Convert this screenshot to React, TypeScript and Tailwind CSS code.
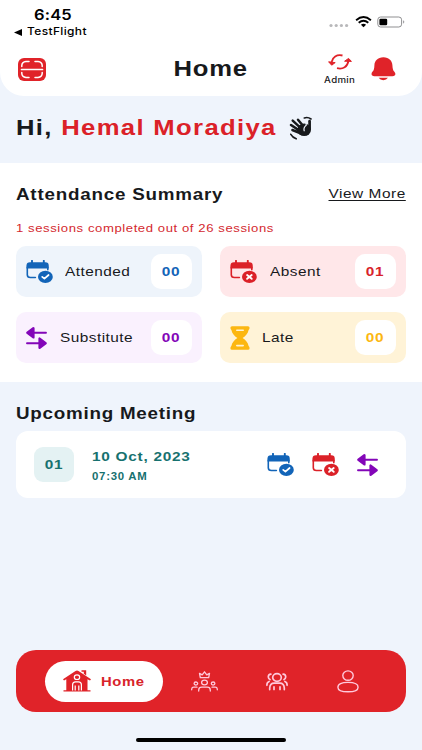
import React from 'react';
import { clsx } from 'clsx';

interface IconProps {
  className?: string;
}

interface WideProps {
  className?: string;
  children: React.ReactNode;
}

// Extended lettering used all over the app
const Wide: React.FC<WideProps> = ({ className, children }) => (
  <span className={clsx('inline-block shrink-0 scale-x-[1.14] whitespace-nowrap', className)}>{children}</span>
);

const ScanIcon = () => (
  <svg width="28" height="23" viewBox="0 0 28 23" fill="none">
    <rect x="0" y="0" width="28" height="23" rx="6" fill="#e02329" />
    <path
      d="M3.8 8.5V7.5Q4 4 8 3.6H11M17 3.6H20Q24 4 24.2 7.5V8.5M3.8 14.5V15.5Q4 19 8 19.4H11M17 19.4H20Q24 19 24.2 15.5V14.5"
      stroke="#fff"
      strokeWidth="1.5"
      strokeLinecap="round"
    />
    <path d="M3.5 11.5H24.5" stroke="#fff" strokeWidth="1.7" strokeLinecap="round" />
  </svg>
);

const SwitchIcon = () => (
  <svg width="24" height="16" viewBox="0 0 24 16" fill="none" stroke="#e02329" strokeWidth="1.8">
    <path d="M14.5 1.5C8.5 .2 4.6 3.2 3.6 8" />
    <path d="M9 14.2C15 15.8 19.5 12.6 20.4 7" />
    <path d="M.6 7.8L7.2 8.6L3.7 11.2Z" fill="#e02329" strokeWidth="1" strokeLinejoin="round" />
    <path d="M16.6 7.2L23.4 7.4L20.6 4.4Z" fill="#e02329" strokeWidth="1" strokeLinejoin="round" />
  </svg>
);

const BellIcon = () => (
  <svg width="25" height="24" viewBox="0 0 25 24" fill="#e02329">
    <path d="M12.4 .3C6.5 .3 3.6 4 3.4 8.2C3.3 11.8 2.9 13.2 1.4 14.8C-.2 16.8 .4 19.3 3.4 19.3H21.4C24.6 19.3 25.2 16.8 23.4 14.8C22 13.2 21.6 11.8 21.4 8.2C21.2 4 18.2 .3 12.4 .3Z" />
    <path d="M7.6 20.8H17Q15.4 23.2 12.3 23.2T7.6 20.8Z" />
  </svg>
);

const WaveIcon = () => (
  <svg width="24" height="25" viewBox="0 0 24 25" fill="none" stroke="#17191c" strokeLinecap="round">
    <ellipse cx="15.2" cy="13.8" rx="6.8" ry="6.3" fill="#17191c" stroke="none" />
    <path d="M3.7 4.6L11.5 11.8M9 3.8L14 9.8M2 9L10.5 14.6M3.4 14L11 17.2" strokeWidth="2.5" />
    <path d="M20.6 5.2V13" strokeWidth="2.7" />
    <path d="M17.2 5.6V9.2Q14.2 11.6 15.2 14.8" stroke="#eff4fc" strokeWidth="1.2" />
    <path d="M15.3 2Q18.8 .7 22 3M1.8 18.3Q3.6 21.4 7.2 22.8" strokeWidth="1.6" />
  </svg>
);

const CalendarIcon: React.FC<IconProps & { mark: 'check' | 'cross' }> = ({ className, mark }) => (
  <svg width="28" height="24" viewBox="0 0 28 24" fill="none" className={className}>
    <path d="M6 .8V3M17.8 .8V3" stroke="currentColor" strokeWidth="1.9" strokeLinecap="round" />
    <path d="M.5 8.6V5.2Q.5 2.2 4 2.2H19.4Q22.7 2.2 22.7 5.2V8.6Z" fill="currentColor" />
    <path d="M1.3 7V14.8Q1.3 17.5 4.4 17.5H9.4M21.8 7V9.8" stroke="currentColor" strokeWidth="1.6" strokeLinecap="round" />
    <ellipse cx="19.4" cy="16.9" rx="7.4" ry="6.1" fill="currentColor" />
    {mark === 'check' ? (
      <path d="M16.2 16.9L18.4 18.7L22.6 15" stroke="#fff" strokeWidth="1.7" strokeLinecap="round" strokeLinejoin="round" />
    ) : (
      <path d="M17.1 15.1L21.7 18.8M21.7 15.1L17.1 18.8" stroke="#fff" strokeWidth="1.9" strokeLinecap="round" />
    )}
  </svg>
);

const SwapIcon = () => (
  <svg width="21" height="24" viewBox="0 0 21 24" className="text-[#8306b8]">
    <path d="M6 6.8H20M1 17.2H15" stroke="currentColor" strokeWidth="1.9" strokeLinecap="round" />
    <path d="M1.4 6.8L7.4 2.2V11.4ZM19.6 17.2L13.6 12.6V21.8Z" fill="currentColor" stroke="currentColor" strokeWidth="2.4" strokeLinejoin="round" />
  </svg>
);

const HourglassIcon = () => (
  <svg width="20" height="24" viewBox="0 0 20 24" fill="none">
    <path
      d="M2 .2H18Q19.6 .2 19.6 1.7Q19.6 3.2 18.6 4C18 7.6 15.6 10 12.6 12C15.6 14 18 16.4 18.6 20Q19.6 20.8 19.6 22.3Q19.6 23.8 18 23.8H2Q.4 23.8 .4 22.3Q.4 20.8 1.4 20C2 16.4 4.4 14 7.4 12C4.4 10 2 7.6 1.4 4Q.4 3.2 .4 1.7Q.4 .2 2 .2Z"
      fill="#fcb711"
    />
    <path d="M6.8 4.2H13.2M6.8 19.6H13.2" stroke="#fff3d4" strokeWidth="1.6" strokeLinecap="round" />
  </svg>
);

const HouseIcon = () => (
  <svg width="28" height="22" viewBox="0 0 28 22" fill="none">
    <path d="M0 9.2L12.5 .9Q14 .2 15.5 .9L28 9.2L27 10.4L24.5 9.2V20.3H27.5V21.6H.5V20.3H3.3V9.2L1 10.4Z" fill="#e02329" />
    <path d="M18.5 .3H23.2V5.4L20.8 3.8V1.8H18.5Z" fill="#e02329" />
    <ellipse cx="14" cy="7.2" rx="2.7" ry="2.3" stroke="#fff" strokeWidth="1.2" />
    <path d="M9.6 20.6V14.8Q9.6 11.9 12.6 11.9H15.4Q18.4 11.9 18.4 14.8V20.6M12.2 20.6V15.4M15.8 20.6V15.4" stroke="#fff" strokeWidth="1.2" />
  </svg>
);

const LeadersIcon = () => (
  <svg width="27" height="21" viewBox="0 0 27 21" fill="none" stroke="#ffc9dc" strokeWidth="1.3" strokeLinecap="round" strokeLinejoin="round">
    <path d="M9.3 6.6L8.5 2.4L11.2 3.9L13.5 .8L15.8 3.9L18.5 2.4L17.7 6.6Z" />
    <ellipse cx="13.5" cy="11.5" rx="2.9" ry="2.3" />
    <ellipse cx="4.9" cy="12.5" rx="1.8" ry="1.5" />
    <ellipse cx="22.1" cy="12.5" rx="1.8" ry="1.5" />
    <path d="M7.7 20.1V18.9Q7.8 16.2 10.8 16.2H16.2Q19.2 16.2 19.3 18.9V20.1M.7 18.8V18Q.9 16.2 2.9 16.2H6M26.3 18.8V18Q26.1 16.2 24.1 16.2H21" />
  </svg>
);

const MembersIcon = () => (
  <svg width="22" height="19" viewBox="0 0 22 19" fill="none" stroke="#ffc9dc" strokeWidth="1.7" strokeLinecap="round" strokeLinejoin="round">
    <ellipse cx="11" cy="5.5" rx="4.3" ry="3.8" />
    <path d="M3.7 17.6V16Q4 11.2 8.2 11.2H13.8Q18 11.2 18.3 16V17.6M8 14.8V17.4M14 14.8V17.4" />
    <path d="M4.9 2.1Q2.2 2.4 2.3 5Q2.4 6.9 4 7.5M17.1 2.1Q19.8 2.4 19.7 5Q19.6 6.9 18 7.5M3.1 9.5Q.8 10.4 .9 13.3M18.9 9.5Q21.2 10.4 21.1 13.3" />
  </svg>
);

const ProfileIcon = () => (
  <svg width="22" height="23" viewBox="0 0 22 23" fill="none" stroke="#ffc9dc" strokeWidth="1.4">
    <ellipse cx="11" cy="5.6" rx="5.2" ry="4.7" />
    <path d="M.9 17.2C.9 13.8 4.6 12.4 11 12.4S21.1 13.8 21.1 17.2C21.1 20.8 17.5 21.8 11 21.8S.9 20.8 .9 17.2Z" />
  </svg>
);

const StatusBar = () => (
  <div className="flex h-[42px] justify-between">
    <div className="pt-[6px] text-black">
      <div className="h-[19px] pl-[34px] text-[14.5px] leading-[18px] font-semibold tracking-[0.01em]">
        <Wide className="origin-left">6:45</Wide>
      </div>
      <div className="flex items-center gap-[5px] pl-[14px] text-[10.5px] leading-[14px] font-medium tracking-[0.03em]">
        <svg width="8" height="7" viewBox="0 0 8 7"><path d="M0 3.5L8 0V7Z" /></svg>
        <Wide className="origin-left">TestFlight</Wide>
      </div>
    </div>
    <div className="mt-[15px] mr-[17px] flex h-[13px] items-center">
      <svg width="20" height="12" viewBox="0 0 20 12" fill="#b8b8ba">
        <circle cx="2" cy="9.5" r="1.6" />
        <circle cx="7.2" cy="9.5" r="1.6" />
        <circle cx="12.4" cy="9.5" r="1.6" />
        <circle cx="17.6" cy="9.5" r="1.6" />
      </svg>
      <svg width="17" height="12" viewBox="0 0 17 12" fill="none" className="ml-1.5">
        <path d="M1.1 4.2Q8.5 -2 15.9 4.2M3.7 6.8Q8.5 2.8 13.3 6.8" stroke="#000" strokeWidth="1.9" />
        <path d="M5.9 8.7Q8.5 6.6 11.1 8.7L8.5 11.2Z" fill="#000" />
      </svg>
      <svg width="28" height="12" viewBox="0 0 28 12" fill="none" className="ml-[5px]">
        <rect x=".8" y="1" width="23.8" height="10" rx="2.8" stroke="#8f8f91" strokeWidth="1" />
        <rect x="2.4" y="2.7" width="7.8" height="6.6" rx="1.2" fill="#000" />
        <path d="M26.2 4.3Q28.4 6 26.2 7.7Z" fill="#8f8f91" />
      </svg>
    </div>
  </div>
);

const stats = [
  { label: 'Attended', value: '00', icon: <CalendarIcon mark="check" className="text-[#1264b8]" />, gap: 'gap-[11px]', card: 'bg-[#eef4fb]', text: 'text-[#1264b8]' },
  { label: 'Absent', value: '01', icon: <CalendarIcon mark="cross" className="text-[#db2128]" />, gap: 'gap-3', card: 'bg-[#ffe7e9]', text: 'text-[#d8232a]' },
  { label: 'Substitute', value: '00', icon: <SwapIcon />, gap: 'gap-[13px]', card: 'bg-[#faf1fe]', text: 'text-[#8306b8]' },
  { label: 'Late', value: '00', icon: <HourglassIcon />, gap: 'gap-3', card: 'bg-[#fff3d7]', text: 'text-[#fcb711]' },
];

export default function App() {
  return (
    <div className="flex h-[750px] w-[422px] flex-col overflow-hidden bg-[#eff4fc] font-['Liberation_Sans',Arial,sans-serif] text-[#17191c]">
      <header className="h-24 shrink-0 rounded-b-[24px] bg-white">
        <div className="font-['Inter',sans-serif]">
          <StatusBar />
        </div>
        <div className="grid grid-cols-[1fr_auto_1fr] items-center pr-[26px] pl-[18px]">
          <ScanIcon />
          <h1 className="flex h-[54px] items-center pl-[7px] text-[22.5px] font-bold tracking-[0.03em]">
            <Wide>Home</Wide>
          </h1>
          <div className="flex items-center justify-end gap-[15px]">
            <div className="flex w-8 flex-col items-center pt-px">
              <SwitchIcon />
              <span className="mt-1 flex h-3 justify-center font-['Inter',sans-serif] text-[8.5px] leading-3 font-medium tracking-[0.03em]">
                <Wide>Admin</Wide>
              </span>
            </div>
            <BellIcon />
          </div>
        </div>
      </header>

      {/* Greeting */}
      <section className="flex h-[67px] shrink-0 items-center pb-[3px] pl-4">
        <div className="w-[273px] text-[22.5px] font-bold tracking-[0.052em]">
          <Wide className="origin-left">
            Hi, <span className="text-[#db2128]">Hemal Moradiya</span>
          </Wide>
        </div>
        <WaveIcon />
      </section>

      {/* Attendance */}
      <section className="h-[219px] shrink-0 bg-white px-4">
        <div className="flex h-[62px] items-center justify-between pt-px">
          <h2 className="text-[16.5px] font-bold tracking-[0.041em]">
            <Wide className="origin-left">Attendance Summary</Wide>
          </h2>
          <a className="text-[13.5px] tracking-[0.035em]">
            <Wide className="origin-right underline underline-offset-2">View More</Wide>
          </a>
        </div>
        <p className="h-[21px] text-[11.5px] leading-[7px] tracking-[0.044em] text-[#d4282e]">
          <Wide className="origin-left">1 sessions completed out of 26 sessions</Wide>
        </p>
        <div className="grid grid-cols-2 gap-x-[18px] gap-y-[15px]">
          {stats.map((s) => (
            <div key={s.label} className={clsx('flex h-[51px] items-center rounded-[10px] pr-[10px] pl-[10px]', s.card, s.gap)}>
              {s.icon}
              <span className="flex-1 pt-[2px] text-[13.5px] tracking-[0.03em]">
                <Wide className="origin-left">{s.label}</Wide>
              </span>
              <span className={clsx('flex h-[35px] w-[41px] items-center justify-center rounded-[10px] bg-white pt-px text-[13.5px] font-bold tracking-[0.04em]', s.text)}>
                <Wide>{s.value}</Wide>
              </span>
            </div>
          ))}
        </div>
      </section>

      {/* Upcoming meeting */}
      <section className="px-4">
        <h2 className="flex h-[49px] items-center pt-[13px] text-[16.5px] font-bold tracking-[0.04em]">
          <Wide className="origin-left">Upcoming Meeting</Wide>
        </h2>
        <div className="flex h-[67px] items-center rounded-[12px] bg-white pr-7 pl-[18px] font-bold text-[#17716f]">
          <span className="flex h-[35px] w-10 items-center justify-center rounded-[9px] bg-[#e4f2f3] pt-px text-[13.5px] tracking-[0.04em]">
            <Wide>01</Wide>
          </span>
          <div className="ml-[18px] flex-1 pt-[4px] tracking-[0.04em]">
            <p className="text-[13.5px] leading-5">
              <Wide className="origin-left">10 Oct, 2023</Wide>
            </p>
            <p className="text-[10px] leading-5">
              <Wide className="origin-left">07:30 AM</Wide>
            </p>
          </div>
          <div className="flex items-center gap-[17px]">
            <CalendarIcon mark="check" className="text-[#1264b8]" />
            <CalendarIcon mark="cross" className="text-[#db2128]" />
            <SwapIcon />
          </div>
        </div>
      </section>

      <nav className="mx-4 mt-auto flex h-[62px] shrink-0 items-center rounded-[20px] bg-[#e02329] pl-[29px]">
        <div className="flex h-[41px] w-[118px] items-center gap-[10px] rounded-full bg-white pl-[18px] text-[13px] font-bold tracking-[0.04em] text-[#d8232a]">
          <HouseIcon />
          <span className="pt-px">
            <Wide className="origin-left">Home</Wide>
          </span>
        </div>
        <div className="ml-7 flex items-center">
          <LeadersIcon />
          <span className="ml-12"><MembersIcon /></span>
          <span className="ml-[49px]"><ProfileIcon /></span>
        </div>
      </nav>
      <div className="mx-auto mt-[26px] mb-2 h-1 w-[150px] shrink-0 rounded-full bg-black" />
    </div>
  );
}
